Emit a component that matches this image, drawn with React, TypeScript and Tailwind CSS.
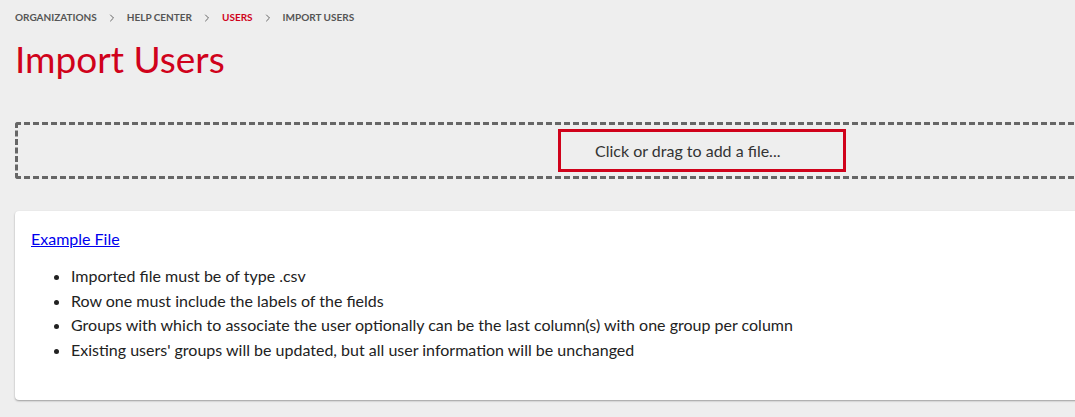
import { ChevronRight } from 'lucide-react';

const crumbs = [
  { label: 'Organizations', active: false },
  { label: 'Help Center', active: false },
  { label: 'Users', active: true },
  { label: 'Import Users', active: false },
];

const rules = [
  'Imported file must be of type .csv',
  'Row one must include the labels of the fields',
  'Groups with which to associate the user optionally can be the last column(s) with one group per column',
  "Existing users' groups will be updated, but all user information will be unchanged",
];

export default function App() {
  return (
    <div
      className="h-[417px] w-full overflow-hidden bg-[#eeeeee]"
      style={{ fontFamily: 'Lato, "Open Sans", sans-serif' }}
    >
      <div className="w-[1404px] px-[15px]">
        {/* breadcrumb */}
        <nav className="flex h-[35px] items-center text-[10px] font-bold uppercase text-[#555]">
          {crumbs.map((c, i) => (
            <div key={c.label} className="flex items-center">
              {i > 0 && <ChevronRight className="mx-[9px] h-3 w-3 text-[#666]" strokeWidth={2} />}
              <span className={c.active ? 'text-[#d0021b]' : ''}>{c.label}</span>
            </div>
          ))}
        </nav>

        <h1 className="text-[37px] font-normal leading-[48px] text-[#d0021b]">Import Users</h1>

        {/* drop zone */}
        <div className="mt-[39px] flex h-[57px] items-center justify-center rounded-[3px] border-[3px] border-dashed border-[#666]">
          <div className="flex h-[43px] w-[288px] items-center border-[3px] border-[#d0021b] pl-[34px] text-[16px] text-[#333]">
            Click or drag to add a file...
          </div>
        </div>

        {/* info card */}
        <div className="mt-[32px] h-[189px] rounded-[4px] bg-white px-4 pt-[16px] shadow-[0_1px_2px_rgba(0,0,0,0.35)]">
          <a href="#" className="text-[16px] leading-6 text-[#0000ee] underline">
            Example File
          </a>
          <ul className="mt-[13px] list-disc pl-[40px] text-[16px] text-[#222]">
            {rules.map((r) => (
              <li key={r} className="leading-[24.5px]">
                {r}
              </li>
            ))}
          </ul>
        </div>
      </div>
    </div>
  );
}
